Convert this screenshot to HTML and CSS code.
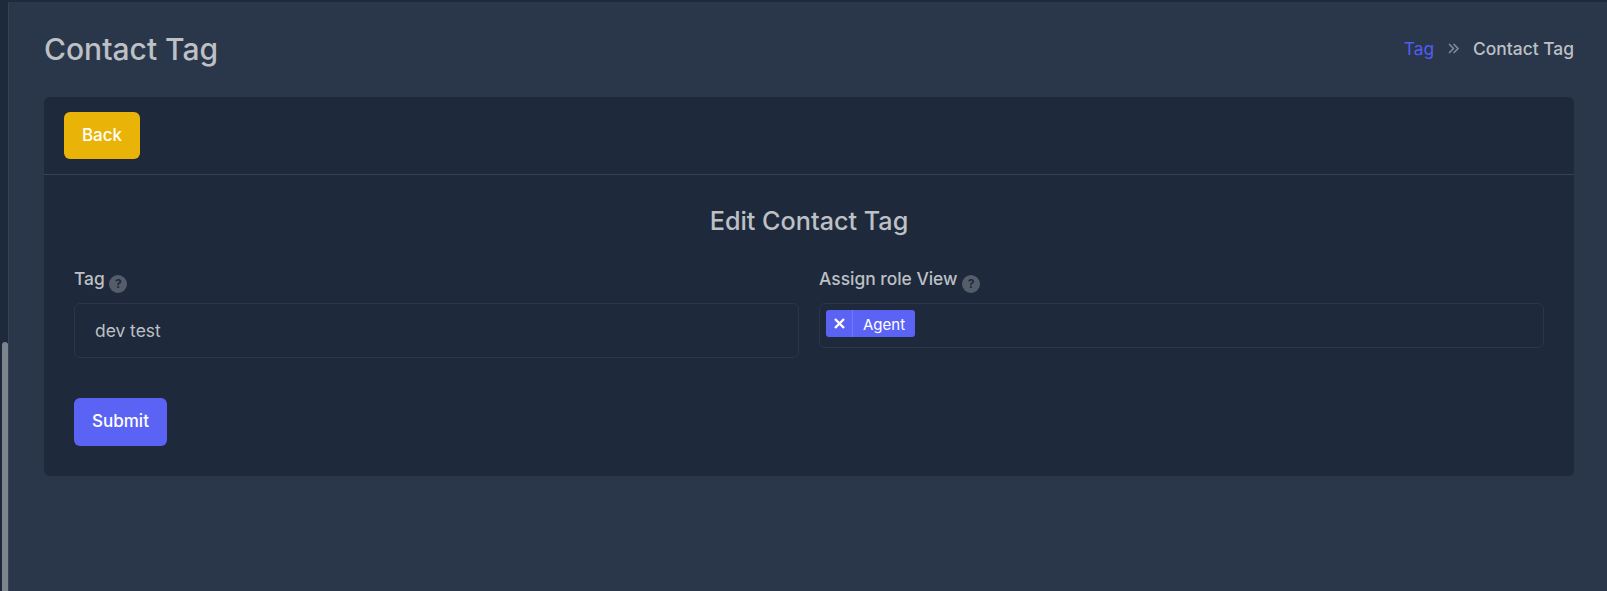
FILE: index.html
```html
<!DOCTYPE html>
<html lang="en">
<head>
    <meta charset="utf-8">
    <title>Contact Tag</title>
    <link rel="stylesheet" href="styles.css">
</head>
<body>
<div class="app">
    <aside class="sidebar">
        <div class="scroll-thumb"></div>
    </aside>
    <main class="content">
        <div class="page-head">
            <h1>Contact Tag</h1>
            <nav class="crumbs">
                <a href="#">Tag</a>
                <svg class="crumb-sep" width="11" height="11" viewBox="0 0 11 11" fill="none" stroke="#7f8998" stroke-width="1.6">
                    <path d="M1 1l4.5 4.5L1 10"/>
                    <path d="M5.5 1L10 5.5 5.5 10"/>
                </svg>
                <span>Contact Tag</span>
            </nav>
        </div>
        <section class="card">
            <div class="card-head">
                <a class="btn btn-back" href="#">Back</a>
            </div>
            <div class="card-body">
                <h2>Edit Contact Tag</h2>
                <form class="form-grid">
                    <div class="field">
                        <label class="field-label">Tag <span class="help">?</span></label>
                        <div class="input">dev test</div>
                    </div>
                    <div class="field">
                        <label class="field-label">Assign role View <span class="help">?</span></label>
                        <div class="select">
                            <span class="chip"><span class="chip-x">
                                <svg width="11" height="11" viewBox="0 0 11 11" stroke="#fff" stroke-width="2.4"><path d="M1 1l9 9M10 1l-9 9"/></svg>
                            </span><span class="chip-text">Agent</span></span>
                        </div>
                    </div>
                </form>
                <a class="btn btn-submit" href="#">Submit</a>
            </div>
        </section>
    </main>
</div>
</body>
</html>
```

FILE: styles.css
```css
* {
    box-sizing: border-box;
}
html, body {
    height: 100%;
}
body {
    margin: 0;
    background: #2a3649;
    color: #bdc0c5;
    font-family: Inter, "Liberation Sans", sans-serif;
    font-size: 17.4px;
    overflow: hidden;
}
.app {
    display: flex;
    height: 100%;
    border-top: 2px solid #1e293b;
}
.sidebar {
    width: 9px;
    background: #1e293b;
    border-right: 1px solid #364154;
    display: flex;
    flex-direction: column;
    justify-content: flex-end;
    padding-left: 2px;
}
.scroll-thumb {
    width: 6px;
    height: 249px;
    background: #7d848f;
    border-radius: 3px 3px 0 0;
}
.content {
    flex: 1;
    padding: 0 33px 0 35px;
}
.page-head {
    display: flex;
    justify-content: space-between;
    align-items: center;
    height: 95px;
}
h1 {
    margin: 0 0 2px;
    font-size: 30px;
    font-weight: 500;
    color: #bdc0c5;
}
.crumbs {
    display: flex;
    align-items: center;
    gap: 14px;
    font-weight: 500;
    margin-bottom: 2px;
}
.crumbs a {
    color: #505df2;
    font-weight: 400;
    text-decoration: none;
}
.card {
    height: 379px;
    background: #1e293b;
    border-radius: 6px;
}
.card-head {
    height: 78px;
    padding: 15px 20px;
    border-bottom: 1px solid #364154;
}
.card-body {
    padding: 29px 30px;
}
h2 {
    margin: 0 0 30px;
    text-align: center;
    font-size: 25.2px;
    line-height: 34px;
    font-weight: 500;
    color: #bdc0c5;
}
.btn {
    display: inline-flex;
    align-items: center;
    justify-content: center;
    color: #fff;
    font-size: 17px;
    font-weight: 500;
    text-decoration: none;
    border-radius: 6px;
    padding-bottom: 2px;
}
.btn-back {
    width: 76px;
    height: 47px;
    background: #eab308;
}
.btn-submit {
    width: 93px;
    height: 48px;
    background: #5b63f5;
}
.form-grid {
    display: grid;
    grid-template-columns: 1fr 1fr;
    gap: 20px;
    align-items: start;
    height: 130px;
}
.field-label {
    display: block;
    height: 35px;
    font-weight: 500;
    line-height: 22px;
}
.help {
    display: inline-flex;
    align-items: center;
    justify-content: center;
    position: relative;
    top: 3px;
    width: 18px;
    height: 18px;
    border-radius: 50%;
    background: #555d6a;
    color: #1e293b;
    font-size: 12px;
    font-weight: 700;
}
.input {
    height: 55px;
    padding: 0 20px;
    display: flex;
    align-items: center;
    border: 1px solid #2c3648;
    border-radius: 6px;
}
.select {
    height: 45px;
    padding: 6px;
    border: 1px solid #2c3648;
    border-radius: 6px;
}
.chip {
    display: inline-flex;
    height: 27px;
    align-items: center;
    background: #5b63f5;
    border-radius: 3px;
    color: #fff;
    font-size: 15px;
}
.chip-x {
    display: flex;
    align-items: center;
    justify-content: center;
    width: 27px;
    height: 100%;
    border-right: 1px solid #717af7;
}
.chip-text {
    padding: 1px 10px 0;
}
```
